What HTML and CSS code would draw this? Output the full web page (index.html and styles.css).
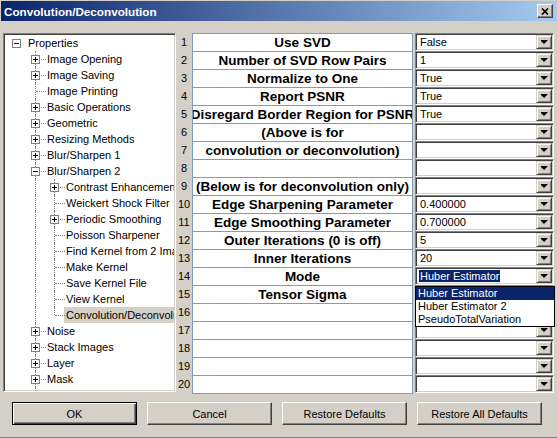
FILE: index.html
```html
<!DOCTYPE html>
<html lang="en">
<head>
    <meta charset="UTF-8">
    <title>Convolution/Deconvolution</title>
    <link rel="stylesheet" href="styles.css">
</head>
<body>
<div class="window">
    <div class="titlebar">
        <span class="title">Convolution/Deconvolution</span>
        <div class="close-btn">
            <svg width="8" height="7" viewBox="0 0 8 7"><path d="M1 0.5l6 6M7 0.5l-6 6" stroke="#000" stroke-width="1.7"/></svg>
        </div>
    </div>

    <div class="content">
        <div class="main">
            <!-- left tree -->
            <div class="tree">
                <div class="node"><span class="conn root"><span class="exp minus"></span></span><span class="label">Properties</span></div>
                <div class="node"><span class="indent"></span><span class="conn"><span class="exp plus"></span></span><span class="label">Image Opening</span></div>
                <div class="node"><span class="indent"></span><span class="conn"><span class="exp plus"></span></span><span class="label">Image Saving</span></div>
                <div class="node"><span class="indent"></span><span class="conn"></span><span class="label">Image Printing</span></div>
                <div class="node"><span class="indent"></span><span class="conn"><span class="exp plus"></span></span><span class="label">Basic Operations</span></div>
                <div class="node"><span class="indent"></span><span class="conn"><span class="exp plus"></span></span><span class="label">Geometric</span></div>
                <div class="node"><span class="indent"></span><span class="conn"><span class="exp plus"></span></span><span class="label">Resizing Methods</span></div>
                <div class="node"><span class="indent"></span><span class="conn"><span class="exp plus"></span></span><span class="label">Blur/Sharpen 1</span></div>
                <div class="node"><span class="indent"></span><span class="conn"><span class="exp minus"></span></span><span class="label">Blur/Sharpen 2</span></div>
                <div class="node"><span class="indent"></span><span class="guide"></span><span class="conn"><span class="exp plus"></span></span><span class="label">Contrast Enhancement</span></div>
                <div class="node"><span class="indent"></span><span class="guide"></span><span class="conn"></span><span class="label">Weickert Shock Filter</span></div>
                <div class="node"><span class="indent"></span><span class="guide"></span><span class="conn"><span class="exp plus"></span></span><span class="label">Periodic Smoothing</span></div>
                <div class="node"><span class="indent"></span><span class="guide"></span><span class="conn"></span><span class="label">Poisson Sharpener</span></div>
                <div class="node"><span class="indent"></span><span class="guide"></span><span class="conn"></span><span class="label">Find Kernel from 2 Images</span></div>
                <div class="node"><span class="indent"></span><span class="guide"></span><span class="conn"></span><span class="label">Make Kernel</span></div>
                <div class="node"><span class="indent"></span><span class="guide"></span><span class="conn"></span><span class="label">Save Kernel File</span></div>
                <div class="node"><span class="indent"></span><span class="guide"></span><span class="conn"></span><span class="label">View Kernel</span></div>
                <div class="node"><span class="indent"></span><span class="guide"></span><span class="conn last"></span><span class="label selected">Convolution/Deconvolution</span></div>
                <div class="node"><span class="indent"></span><span class="conn"><span class="exp plus"></span></span><span class="label">Noise</span></div>
                <div class="node"><span class="indent"></span><span class="conn"><span class="exp plus"></span></span><span class="label">Stack Images</span></div>
                <div class="node"><span class="indent"></span><span class="conn"><span class="exp plus"></span></span><span class="label">Layer</span></div>
                <div class="node"><span class="indent"></span><span class="conn"><span class="exp plus"></span></span><span class="label">Mask</span></div>
                <div class="node"><span class="indent"></span><span class="conn"><span class="exp plus"></span></span><span class="label">Point Operations</span></div>
            </div>

            <!-- property grid -->
            <div class="props">
                <div class="row"><span class="num">1</span><span class="name">Use SVD</span><div class="combo"><span class="val">False</span><span class="drop-btn"></span></div></div>
                <div class="row"><span class="num">2</span><span class="name">Number of SVD Row Pairs</span><div class="combo"><span class="val">1</span><span class="drop-btn"></span></div></div>
                <div class="row"><span class="num">3</span><span class="name">Normalize to One</span><div class="combo"><span class="val">True</span><span class="drop-btn"></span></div></div>
                <div class="row"><span class="num">4</span><span class="name">Report PSNR</span><div class="combo"><span class="val">True</span><span class="drop-btn"></span></div></div>
                <div class="row"><span class="num">5</span><span class="name">Disregard Border Region for PSNR</span><div class="combo"><span class="val">True</span><span class="drop-btn"></span></div></div>
                <div class="row"><span class="num">6</span><span class="name">(Above is for</span><div class="combo"><span class="val"></span><span class="drop-btn"></span></div></div>
                <div class="row"><span class="num">7</span><span class="name">convolution or deconvolution)</span><div class="combo"><span class="val"></span><span class="drop-btn"></span></div></div>
                <div class="row"><span class="num">8</span><span class="name"></span><div class="combo"><span class="val"></span><span class="drop-btn"></span></div></div>
                <div class="row"><span class="num">9</span><span class="name">(Below is for deconvolution only)</span><div class="combo"><span class="val"></span><span class="drop-btn"></span></div></div>
                <div class="row"><span class="num">10</span><span class="name">Edge Sharpening Parameter</span><div class="combo"><span class="val">0.400000</span><span class="drop-btn"></span></div></div>
                <div class="row"><span class="num">11</span><span class="name">Edge Smoothing Parameter</span><div class="combo"><span class="val">0.700000</span><span class="drop-btn"></span></div></div>
                <div class="row"><span class="num">12</span><span class="name">Outer Iterations (0 is off)</span><div class="combo"><span class="val">5</span><span class="drop-btn"></span></div></div>
                <div class="row"><span class="num">13</span><span class="name">Inner Iterations</span><div class="combo"><span class="val">20</span><span class="drop-btn"></span></div></div>
                <div class="row"><span class="num">14</span><span class="name">Mode</span>
                    <div class="combo">
                        <span class="val highlighted">Huber Estimator</span><span class="drop-btn"></span>
                        <!-- open dropdown list -->
                        <div class="dropdown-list">
                            <div class="option active">Huber Estimator</div>
                            <div class="option">Huber Estimator 2</div>
                            <div class="option">PseudoTotalVariation</div>
                        </div>
                    </div>
                </div>
                <div class="row"><span class="num">15</span><span class="name">Tensor Sigma</span><div class="combo"><span class="val"></span><span class="drop-btn"></span></div></div>
                <div class="row"><span class="num">16</span><span class="name"></span><div class="combo"><span class="val"></span><span class="drop-btn"></span></div></div>
                <div class="row"><span class="num">17</span><span class="name"></span><div class="combo"><span class="val"></span><span class="drop-btn"></span></div></div>
                <div class="row"><span class="num">18</span><span class="name"></span><div class="combo"><span class="val"></span><span class="drop-btn"></span></div></div>
                <div class="row"><span class="num">19</span><span class="name"></span><div class="combo"><span class="val"></span><span class="drop-btn"></span></div></div>
                <div class="row"><span class="num">20</span><span class="name"></span><div class="combo"><span class="val"></span><span class="drop-btn"></span></div></div>
            </div>
        </div>

        <div class="buttons">
            <button class="btn default">OK</button>
            <button class="btn">Cancel</button>
            <button class="btn">Restore Defaults</button>
            <button class="btn">Restore All Defaults</button>
        </div>
    </div>
</div>
</body>
</html>
```

FILE: styles.css
```css
body {
    margin: 0;
    padding: 0;
    background-color: #d4d0c8;
    font-family: "Liberation Sans", Arial, sans-serif;
    font-size: 11px;
    color: #000;
    overflow: hidden;
}

.window {
    width: 557px;
    height: 438px;
    box-sizing: border-box;
    border-bottom: 1px solid #404040;
    box-shadow: inset 0 -1px #808080;
    background-color: #d4d0c8;
}

/* title bar */
.titlebar {
    height: 20px;
    margin: 1px 0 0 1px;
    padding: 0 4px 0 3px;
    display: flex;
    align-items: center;
    justify-content: space-between;
    background: linear-gradient(to right, #0a246a, #a6caf0);
}

.title {
    color: #fff;
    font-weight: bold;
    font-size: 11.7px;
}

.close-btn {
    width: 16px;
    height: 14px;
    box-sizing: border-box;
    border: 1px solid;
    border-color: #fff #404040 #404040 #fff;
    box-shadow: inset -1px -1px #808080;
    background-color: #d4d0c8;
    display: flex;
    align-items: center;
    justify-content: center;
}

.content {
    padding: 12px 3px 0 3px;
}

.main {
    display: flex;
    height: 361px;
}

/* tree view */
.tree {
    width: 173px;
    height: 359px;
    box-sizing: border-box;
    border: 1px solid;
    border-color: #808080 #fff #fff #808080;
    box-shadow: inset 1px 1px #404040, inset -1px -1px #d4d0c8;
    background-color: #fff;
    padding: 1px 1px 1px 3px;
    overflow: hidden;
    flex-shrink: 0;
}

.node {
    display: flex;
    height: 16px;
    white-space: nowrap;
}

.indent,
.guide,
.conn {
    flex: 0 0 19px;
    height: 16px;
    position: relative;
    display: flex;
    justify-content: center;
    align-items: flex-start;
}

.guide::before,
.conn::before {
    content: "";
    position: absolute;
    left: 9px;
    top: 0;
    bottom: 0;
    border-left: 1px dotted #808080;
}

.conn.last::before {
    bottom: 8px;
}

.conn::after {
    content: "";
    position: absolute;
    left: 10px;
    right: -1px;
    top: 8px;
    border-top: 1px dotted #808080;
}

.conn.root::before,
.conn.root::after {
    display: none;
}

.exp {
    width: 9px;
    height: 9px;
    margin-top: 4px;
    box-sizing: border-box;
    border: 1px solid #808080;
    background-color: #fff;
    position: relative;
    z-index: 1;
}

.exp::before {
    content: "";
    position: absolute;
    left: 1px;
    top: 3px;
    width: 5px;
    height: 1px;
    background-color: #000;
}

.exp.plus::after {
    content: "";
    position: absolute;
    left: 3px;
    top: 1px;
    width: 1px;
    height: 5px;
    background-color: #000;
}

.label {
    padding: 0 2px;
    line-height: 16px;
    min-width: 0;
    overflow: hidden;
}

.label.selected {
    background-color: #d4d0c8;
}

/* property grid */
.props {
    display: flex;
    flex-direction: column;
}

.row {
    display: flex;
    height: 18px;
}

.num {
    width: 16px;
    display: flex;
    align-items: center;
    justify-content: center;
}

.name {
    width: 221px;
    height: 18px;
    box-sizing: border-box;
    border: 1px solid #7f9db9;
    border-bottom: none;
    background-color: #fff;
    display: flex;
    align-items: center;
    justify-content: center;
    overflow: hidden;
    white-space: nowrap;
    font-weight: bold;
    font-size: 13.5px;
}

.row:last-child .name {
    height: 19px;
    border-bottom: 1px solid #7f9db9;
}

.combo {
    width: 139px;
    height: 18px;
    margin-left: 2px;
    box-sizing: border-box;
    border: 1px solid;
    border-color: #808080 #fff #fff #808080;
    box-shadow: inset 1px 1px #404040, inset -1px -1px #d4d0c8;
    background-color: #fff;
    display: flex;
    align-items: center;
    padding: 0 1px 0 4px;
    position: relative;
}

.val {
    white-space: nowrap;
}

.val.highlighted {
    background-color: #0a246a;
    color: #fff;
    margin-left: -1px;
    padding: 0 1px;
}

.drop-btn {
    margin-left: auto;
    width: 16px;
    height: 14px;
    box-sizing: border-box;
    border: 1px solid;
    border-color: #d4d0c8 #404040 #404040 #d4d0c8;
    box-shadow: inset 1px 1px #fff, inset -1px -1px #808080;
    background-color: #d4d0c8;
    display: flex;
    align-items: center;
    justify-content: center;
}

.drop-btn::after {
    content: "";
    width: 7px;
    height: 4px;
    background-color: #000;
    clip-path: polygon(0 0, 7px 0, 7px 1px, 6px 1px, 6px 2px, 5px 2px, 5px 3px, 4px 3px, 4px 4px, 3px 4px, 3px 3px, 2px 3px, 2px 2px, 1px 2px, 1px 1px, 0 1px);
}

.dropdown-list {
    position: absolute;
    left: -1px;
    top: calc(100% + 2px);
    width: 140px;
    box-sizing: border-box;
    border: 1px solid #000;
    background-color: #fff;
    z-index: 5;
}

.option {
    height: 13px;
    line-height: 13px;
    padding-left: 2px;
    white-space: nowrap;
}

.option.active {
    background-color: #0a246a;
    color: #fff;
}

/* bottom buttons */
.buttons {
    display: flex;
    gap: 10px;
    margin-top: 8px;
    padding-left: 9px;
}

.btn {
    width: 125px;
    height: 23px;
    box-sizing: border-box;
    border: 1px solid;
    border-color: #fff #404040 #404040 #fff;
    box-shadow: inset -1px -1px #808080;
    background-color: #d4d0c8;
    font-family: "Liberation Sans", Arial, sans-serif;
    font-size: 11px;
    color: #000;
    padding: 0;
}

.btn.default {
    border-color: #000;
    box-shadow: inset 1px 1px #fff, inset -1px -1px #404040, inset -2px -2px #808080;
}
```
